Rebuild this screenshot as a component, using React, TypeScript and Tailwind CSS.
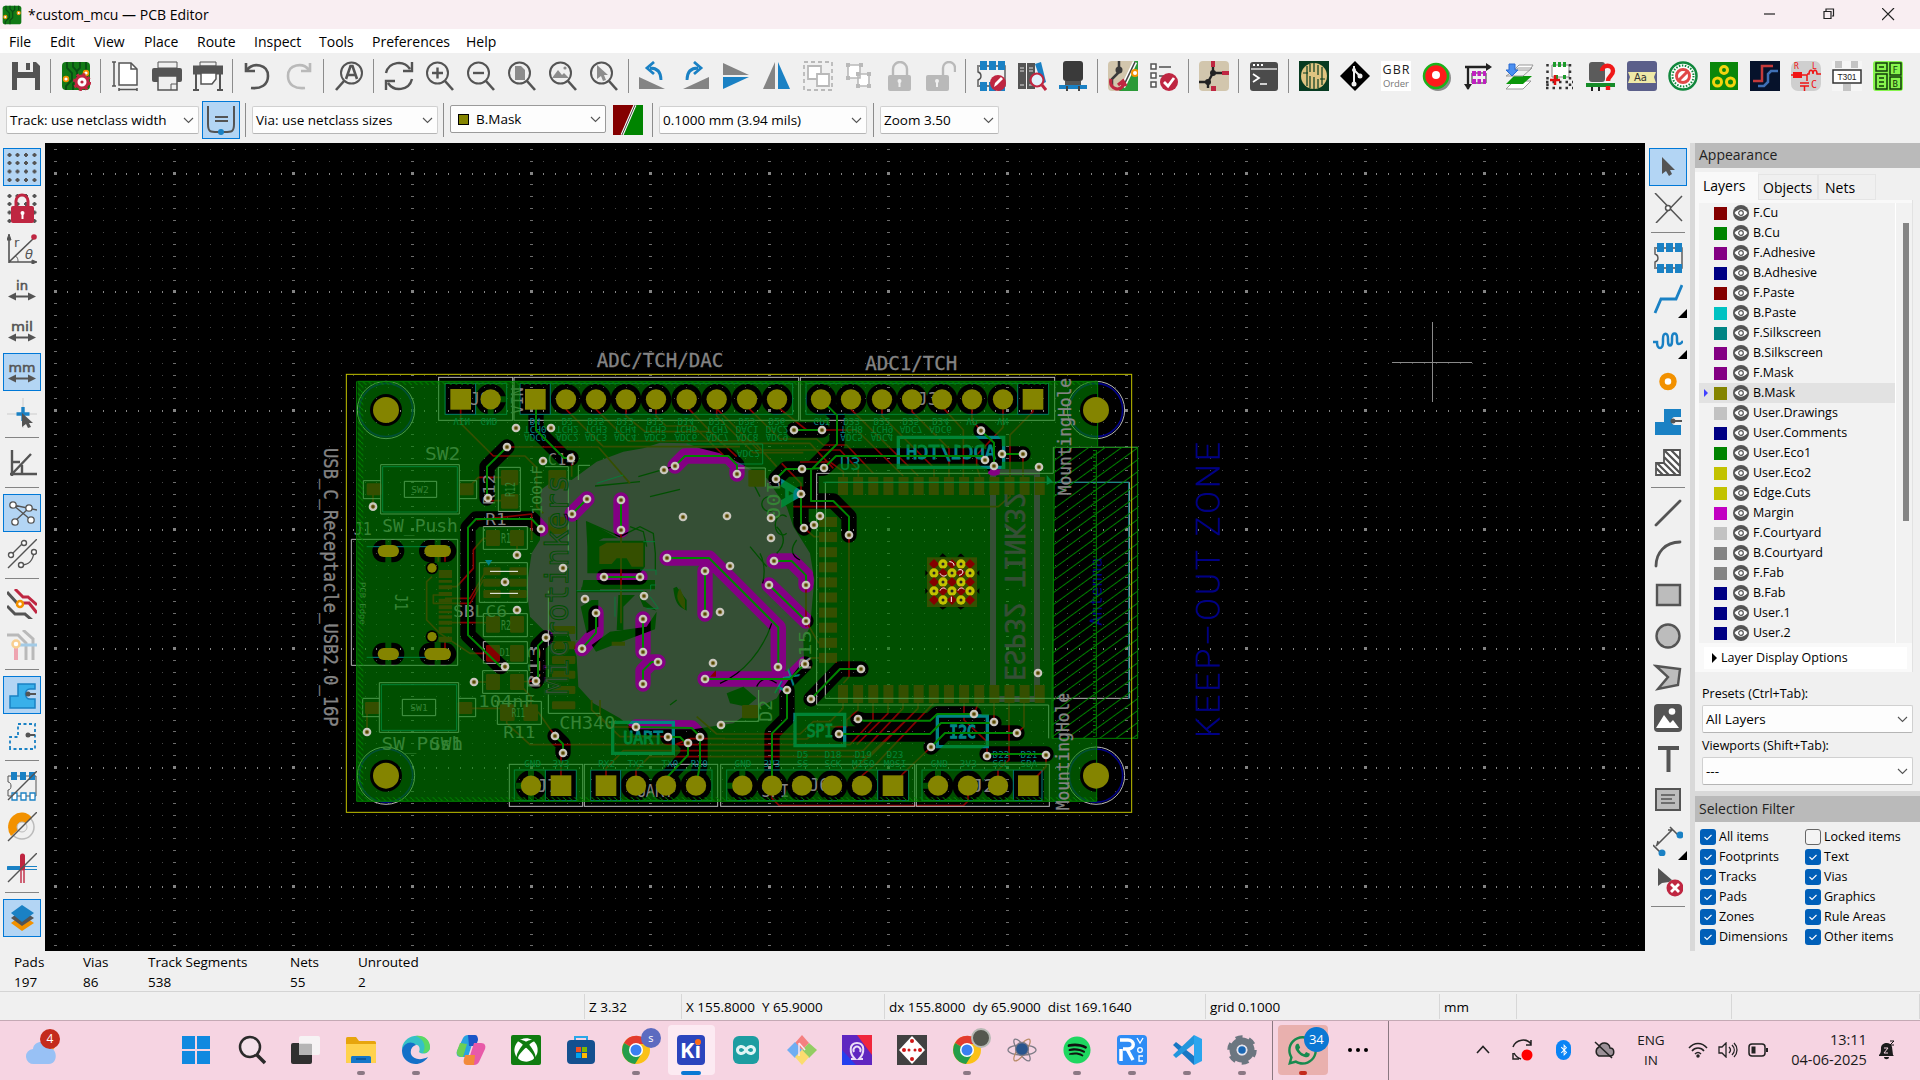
import React from "react";
import { FaSpotify, FaXbox, FaWhatsapp, FaBluetoothB, FaInfinity } from "react-icons/fa";

type Kids = { children?: React.ReactNode };
const D = "#545454";
const B = "#1a81c4";
const R = "#bf2641";
const O = "#f29100";
const G = "#b9b9b9";

function Ico({ children, size = 30 }: Kids & { size?: number }) {
  return (
    <svg width={size} height={size} viewBox="0 0 30 30" fill="none" className="block shrink-0">
      {children}
    </svg>
  );
}

const lens = (
  <g stroke={D} strokeWidth="2">
    <circle cx="12.5" cy="12" r="10.5" />
    <path d="M20 20 28 29" strokeWidth="2.6" />
  </g>
);
const board = (
  <g>
    <rect x="1" y="1" width="28" height="28" rx="4" fill="#127a16" />
    <path d="M6 1v6l5 5v7l-6 6v4M12 1v5l4 4v9l-4 4v6M19 1v6l-4 4M25 1v8" stroke="#0a4d14" strokeWidth="1.8" />
    <circle cx="5" cy="18" r="2.4" fill="#fff" stroke={O} strokeWidth="1.6" />
    <circle cx="25" cy="12" r="2.4" fill="#fff" stroke={O} strokeWidth="1.6" />
  </g>
);
const lock = (open: boolean) => (
  <g>
    <path d={open ? "M17 14V7a6 6 0 0 1 12 0v4" : "M8 14V8a7 7 0 0 1 14 0v6"} stroke={G} strokeWidth="2.4" />
    <rect x={open ? 0 : 3} y="14" width="23" height="16" rx="2" fill={G} />
    <circle cx={open ? 11 : 14.5} cy="20" r="2" fill="#f0f0f0" />
    <path d={open ? "M11 20v6" : "M14.5 20v6"} stroke="#f0f0f0" strokeWidth="2" />
  </g>
);
const footprint = (
  <g>
    <path d="M3 5h26v20H3M2 4v7c4 1 4 7 0 8v7" stroke={D} strokeWidth="1.4" />
    {[4, 13, 22].map((x) => (
      <path key={x} d={`M${x} 0h7v9h-7zM${x} 21h7v9h-7z`} fill={B} />
    ))}
  </g>
);

const topBar: (React.ReactNode | null)[] = [
  <g><path d="M1 1h24l4 4v24H1z" fill={D} /><path d="M7 1h15v10H7zM6 17h18v12H6z" fill="#efefef" /><path d="M15 2h4v7h-4z" fill={D} /></g>,
  null,
  <g>{board}<circle cx="21" cy="21" r="6" fill="#fff" stroke={R} strokeWidth="3" /><circle cx="21" cy="21" r="8" stroke={R} strokeWidth="2.2" strokeDasharray="3 3.3" /><circle cx="21" cy="21" r="1.6" fill={R} /></g>,
  null,
  <g stroke={D} strokeWidth="1.5"><path d="M8 2h12l6 6v16H8z" fill="#fff" /><path d="M20 2v6h6M3 1v24M1 1h4M1 25h4M8 28.5h18M8 27v3M26 27v3" /></g>,
  <g><path d="M6 1h19v6H6z" fill="#efefef" stroke={D} /><rect x="0" y="7" width="30" height="14" rx="2" fill={D} /><path d="M6 15h19v14H6z" fill="#efefef" stroke={D} strokeWidth="1.5" /><path d="M19 29v-6h6" stroke={D} /></g>,
  <g stroke={D}><path d="M7 1h16v4H7z" fill="#efefef" /><path d="M0 5h30v8H0z" fill={D} /><path d="M3 13v16M27 13v16M0 29h6M24 29h6" strokeWidth="2" /><path d="M8 12h15v6l-4 5H8z" fill="#fff" strokeWidth="1.5" /></g>,
  null,
  <path d="M3 2v8h9M4 9C10 1 25 3 25 15c0 9-7 13-17 12" stroke={D} strokeWidth="2.6" />,
  <path d="M26 2v8h-9M25 9C19 1 4 3 4 15c0 9 7 13 17 12" stroke={G} strokeWidth="2.6" />,
  null,
  <g><circle cx="17.5" cy="12" r="10.5" stroke={D} strokeWidth="2" /><path d="M10 20 2 29" stroke={D} strokeWidth="2.6" /><path d="M12 18 16.5 5h2L23 18M14 14h7" stroke={D} strokeWidth="2.6" /></g>,
  null,
  <g stroke={D} strokeWidth="2.4"><path d="M2 12C5 0 20-1 26 8M28 1v9h-9M28 18C25 30 10 31 4 22M2 29v-9h9" /></g>,
  <g>{lens}<path d="M7 12h11M12.500 6.500v11" stroke={D} strokeWidth="2.4" /></g>,
  <g>{lens}<path d="M7 12h11" stroke={D} strokeWidth="2.4" /></g>,
  <g>{lens}<path d="M8 5h6l4 4v10H8z" fill="#8c8c8c" /></g>,
  <g>{lens}<path d="M4 17 10 9l4 5 2-2 5 5z" fill="#8c8c8c" /><circle cx="17" cy="7" r="1.600" fill="#8c8c8c" /></g>,
  <g>{lens}<path d="M8 4v14l4-3 2 5 3-1-2-5h4z" fill="#8c8c8c" /></g>,
  null,
  <g><path d="M0 16v12h26z" fill="#848484" /><path d="M22 19c0-8-4-12-11-12M15 1l-7 6 7 6" stroke={B} strokeWidth="2.800" /></g>,
  <g><path d="M29 16v12H3z" fill="#848484" /><path d="M7 19c0-8 4-12 11-12M14 1l7 6-7 6" stroke={B} strokeWidth="2.800" /></g>,
  <g><path d="M2 2v12h26z" fill="#848484" /><path d="M2 28V16h26z" fill={B} /></g>,
  <g><path d="M13 1v27H1z" fill="#848484" /><path d="M16 1v27h12z" fill={B} /></g>,
  <g stroke={G} strokeWidth="1.800"><path d="M1 1h28v28H1z" strokeDasharray="4 3" /><path d="M5 5h13v13H5z" fill="#fff" /><path d="M14 13h12v12H14z" fill="#fff" /></g>,
  <g stroke={G} strokeWidth="1.600"><path d="M4 4h12v13H4zM14 13h11v12H14z" fill="#fff" /><path d="M2 2h4v4H2zM15 2h4v4h-4zM2 15h4v4H2zM12 11h4v4h-4zM23 11h4v4h-4zM12 23h4v4h-4zM23 23h4v4h-4z" fill={G} stroke="none" /></g>,
  lock(false),
  lock(true),
  null,
  <g>{footprint}<circle cx="22" cy="22" r="8" fill={R} /><path d="M18 26l1-4 6-6 2 2-6 6z" fill="#fff" /></g>,
  <g><path d="M1 2h8v26H1zM10 2h8v26h-8z" fill={D} /><path d="M3 7h4M3 10h4M12 7h4M12 10h4M3 24h4M12 24h4" stroke="#ddd" /><path d="M18 3l6-2 5 20-4 2z" fill={B} /><circle cx="20" cy="19" r="6.500" fill="#e2f2fb" stroke={R} strokeWidth="2.200" /><path d="M25 24l4 5" stroke={R} strokeWidth="3" /></g>,
  <g><rect x="5" y="0" width="20" height="20" rx="3" fill="#3a3a3a" /><path d="M7 20h16v5H7z" fill="#555" /><path d="M1 24h28v4H1z" fill={B} /><path d="M9 25v5M21 25v5" stroke="#444" strokeWidth="2" /></g>,
  null,
  <g><rect width="30" height="30" rx="4" fill="#d2c6ad" /><path d="M26 0h4v30H11z" fill="#2c9a38" /><path d="M11 0v9M12 10l-8 8v6" stroke="#3a3a3a" strokeWidth="2.500" /><path d="M27 1 15 26" stroke="#fff" strokeWidth="4.500" /><path d="M27 1 15 26" stroke="#444" strokeWidth="1.600" /><circle cx="11" cy="9" r="3.500" fill="#3a3a3a" /><circle cx="27" cy="12" r="3" fill="#fff" stroke={O} strokeWidth="2" /><path d="M3 18c-3 12 13 13 12 4M10 24l5-4 3 5" stroke={R} strokeWidth="3.200" /></g>,
  <g><path d="M2 3h5v5H2zM2 12h5v5H2zM2 21h5v5H2z" stroke={D} strokeWidth="1.500" fill="#fff" /><path d="M10 6h12M10 15h6" stroke="#777" strokeWidth="2" /><circle cx="20" cy="21" r="9" fill={R} /><path d="M15 21l4 4 6-8" stroke="#fff" strokeWidth="2.800" /></g>,
  null,
  <g><rect width="30" height="30" rx="4" fill="#d2c6ad" /><path d="M14 3v9h10M14 12l-5 9v6M9 21H0" stroke="#222" strokeWidth="2.400" /><circle cx="14" cy="12" r="3" fill="#222" /><circle cx="9" cy="21" r="3" fill="#222" /><path d="M12 0h4v6h-4zM23 10h7v4h-7zM12 25h5v5h-5z" fill={R} /></g>,
  null,
  <g><rect x="1" y="1" width="28" height="29" rx="3" fill="#4b4b4b" /><path d="M2 8h26" stroke="#ddd" strokeWidth="1.500" /><path d="M4 4h2M8 4h2M12 4h2" stroke="#fff" strokeWidth="2" /><path d="M4 13l6 4-6 4M11 23h7" stroke="#fff" strokeWidth="1.700" /></g>,
  null,
  <g><path d="M0 0h30v30H0z" fill="#073b21" /><circle cx="15" cy="15" r="13" fill="#dfc481" /><path d="M8 5v20M11 3v8M11 15v12M15 2v9M15 16v12M19 4v10M19 18v9M23 6v18M4 12h5M21 18h5" stroke="#073b21" strokeWidth="1.200" /></g>,
  <g><path d="M15 0 30 15 15 30 0 15z" fill="#000" /><path d="M14 5v19M14 9l6 6" stroke="#efefef" strokeWidth="2" /><circle cx="14" cy="23" r="2.500" fill="#efefef" /><circle cx="20" cy="15" r="2.500" fill="#efefef" /><circle cx="14" cy="9" r="2" fill="#efefef" /></g>,
  <g><path d="M0 0h30v30H0z" fill="#fff" /><text x="1.500" y="13" fontSize="12.500" textLength="27" fill="#222" fontFamily="Open Sans, sans-serif">GBR</text><text x="2" y="26" fontSize="9.500" textLength="26" fill="#777" fontFamily="Open Sans, sans-serif">Order</text></g>,
  <g><circle cx="16" cy="17" r="13" fill="#8b8b8b" /><circle cx="14" cy="15" r="12" fill="#ff1a1a" stroke="#1bb21b" strokeWidth="2.500" /><circle cx="14" cy="14" r="4" fill="#fff" /></g>,
  <g><path d="M5 28V6h22M2 6h6" stroke="#222" strokeWidth="2.300" /><path d="M1 23h8l-4 6zM23 2l6 4-6 4z" fill="#222" /><path d="M9 12h14v10H9z" stroke="#333" /><path d="M9 10h4v5H9zM14.500 10h3.500v5h-3.500zM20 10h3v5h-3zM9 18h4v5H9zM14.500 18h3.500v5h-3.500zM20 18h3v5h-3z" fill="#c020c0" /></g>,
  <g stroke="#999"><path d="M2 28h17l8-8H10zM10 9h16l3-5H15z" fill="#fff" /><path d="M2 23h17l9-8H10z" fill="#0a970a" stroke="none" /><path d="M2 15h17l9-8H14z" /><path d="M5 3h6v6h3l-6 6-6-6h3z" fill="#4a8ff0" stroke="#2b6bd0" /></g>,
  <g><path d="M7 4h17v12H7z" fill="#fff" stroke="#888" /><path d="M8 1h3v5H8zM13 1h3v5h-3zM18 1h3v5h-3zM10 14h3v4h-3zM18 14h3v4h-3z" fill="#1c9c2c" /><path d="M2.500 3v26M1 27h27M1 21h27M25 3v25" stroke="#333" strokeWidth="2.500" strokeDasharray="2.500 4" /><path d="M10 14v10M5 19h10" stroke="#e01010" strokeWidth="2.500" /></g>,
  <g><rect x="3" y="1" width="16" height="20" rx="3" fill="#5b5b5b" /><path d="M0 22h29v4H0z" fill="#168b28" /><path d="M6 26v4M13 26v4" stroke="#222" strokeWidth="2" /><path d="M16 10c0-7 11-7 11 0 0 5-5 5-5 10M22 25v4" stroke="#f01818" strokeWidth="4.400" /></g>,
  <g><rect width="30" height="30" rx="3" fill="#5b5f8a" /><path d="M1 11h28l-2 5 2 6H1l2-6z" fill="#efe9a8" /><text x="7" y="20" fontSize="10" fill="#333" fontFamily="DejaVu Sans, sans-serif">Aa</text></g>,
  <g><circle cx="15" cy="15" r="13.500" stroke="#11883d" strokeWidth="2.500" fill="#fff" /><circle cx="15" cy="15" r="10.500" stroke="#11883d" strokeWidth="2" strokeDasharray="1.500 1.500" /><circle cx="15" cy="15" r="6.500" stroke="#e04848" strokeWidth="3" /><path d="M10.500 19.500l9-9" stroke="#e04848" strokeWidth="3" /></g>,
  <g><path d="M1 1h28v28H1z" fill="#0a870a" /><g stroke="#f2d40e" strokeWidth="3"><circle cx="15" cy="9" r="3.500" /><circle cx="8.500" cy="21" r="4" /><circle cx="21.500" cy="21" r="4" /></g></g>,
  <g><path d="M0 0h30v30H0z" fill="#06122b" /><path d="M3 20h9V5h11" stroke="#c53a3a" strokeWidth="2.500" /><path d="M8 25h6l4-4v-8l3-3h7" stroke="#3f6fb5" strokeWidth="2.500" /></g>,
  <g><rect width="30" height="30" rx="7" fill="#cfcfcf" /><g stroke="#f01414" strokeWidth="1.500"><path d="M0 14h16v6M9 22h9M9 25h9M13.500 25v5M16 13h2c0-5 4-5 4 0 0-5 4-5 4 0h4" /><path d="M2 11h9v6H2z" fill="#f01414" stroke="none" /></g><text x="3" y="8" fontSize="8" fill="#f01414" fontFamily="DejaVu Sans Mono, monospace">R</text><text x="21" y="8" fontSize="8" fill="#f01414" fontFamily="DejaVu Sans Mono, monospace">L</text><text x="20" y="27" fontSize="10" fill="#f01414" fontFamily="DejaVu Sans Mono, monospace">C</text></g>,
  <g><path d="M0 0h30v30H0z" fill="#f6f6f6" /><path d="M3 0h7v7H3zM19 0h7v7h-7zM11 23h8v7h-8z" fill="#c4c4c4" /><path d="M1 9h28v13H1z" fill="#fff" stroke="#333" strokeWidth="1.500" /><text x="5.500" y="19" fontSize="8.500" textLength="19" fill="#222" fontFamily="Liberation Sans, sans-serif">T301</text></g>,
  <g><rect width="30" height="30" rx="3" fill="#87f54d" /><path d="M3 2h11v8H3zM3 13h11v15H3zM17 2h11v12H17zM17 16h11v12H17zM6 6h5M6 17h5M6 21h5M6 25h5" stroke="#123a0a" strokeWidth="1.500" /><text x="19.500" y="12" fontSize="9" fill="#123a0a" fontFamily="DejaVu Sans Mono, monospace">F</text><text x="19.500" y="26" fontSize="9" fill="#123a0a" fontFamily="DejaVu Sans Mono, monospace">B</text></g>,
];

const dots = [2.5, 10.5, 19, 27.5].flatMap((x) => [3, 11, 19.5, 28].map((y) => `M${x - 2} ${y}h4M${x} ${y - 2}v4`)).join("");
const unit = (t: string, w: number) => (
  <g>
    <text x={15 - w / 2} y="15" fontSize="12.500" textLength={w} lengthAdjust="spacingAndGlyphs" fill={D} stroke={D} strokeWidth=".5" fontFamily="DejaVu Sans, sans-serif">{t}</text>
    <path d="M4 21.500h22" stroke={D} strokeWidth="2" />
    <path d="M9 17.500v8l-8-4zM21 17.500v8l8-4z" fill={D} />
  </g>
);
const slash = <path d="M1 29 30 0" stroke={D} strokeWidth="1.400" />;

type Tool = { i?: React.ReactNode; on?: boolean; sub?: boolean } | null;
const leftTools: Tool[] = [
  { on: true, i: <path d={dots} stroke={D} strokeWidth="2" /> },
  { i: <g><path d={dots} stroke={D} strokeWidth="2" /><path d="M9 14V8a6 6 0 0 1 12 0v6" stroke={R} strokeWidth="3" /><rect x="4" y="13" width="23" height="17" rx="2" fill={R} /><circle cx="15.500" cy="20" r="2" fill="#fff" /><path d="M15.500 20v6" stroke="#fff" strokeWidth="2" /></g> },
  { i: <g stroke={D}><path d="M2 29V3M2 28h27M2 28 27 4" strokeWidth="1.600" /><path d="M8 22c3 1 3 4 3 6" /><path d="M0 6 2 0l2 6zM25 26l5 2-5 2z" fill={D} /><circle cx="27" cy="3" r="2.800" fill={R} stroke="none" /><text x="7" y="13" fontSize="13" fill={D} stroke="none" fontFamily="DejaVu Sans, sans-serif">r</text><text x="18" y="25" fontSize="13" fontStyle="italic" fill={D} stroke="none" fontFamily="DejaVu Sans, sans-serif">θ</text></g> },
  { i: unit("in", 12) },
  { i: unit("mil", 22) },
  { on: true, i: unit("mm", 27) },
  { i: <g><path d="M16 0v30M0 16h30" stroke="#ccc" /><path d="M16 9v14M9.500 16h13" stroke={B} strokeWidth="3.400" /><path d="M15 15v14l4-3 2 4 3-1-2-4h4z" fill={D} /></g> },
  null,
  { i: <path d="M5 2v26M3 26h27M5 26 24 6M13 14h-7M15 17v9" stroke={D} strokeWidth="2.400" /> },
  null,
  { on: true, i: <g stroke={D} strokeWidth="1.300" fill="#fff"><path d="M6 7 24 22M8 23 22 10M6 7l24 5" /><circle cx="6" cy="7" r="3.200" /><circle cx="22" cy="10" r="3.200" /><circle cx="8" cy="24" r="3.200" /><circle cx="24" cy="22" r="3.200" /></g> },
  { i: <g stroke={D} strokeWidth="1.400">{slash}<path d="M5 15 16 4M14 26c9 0 12-5 13-13" /><g fill="#fff"><circle cx="4" cy="16" r="2.500" /><circle cx="17" cy="4" r="2.500" /><circle cx="14" cy="26" r="2.500" /><circle cx="27" cy="13" r="2.500" /></g></g> },
  null,
  { i: <g strokeWidth="3"><path d="M8 0l8 8h5l9 8M16 14h6l8 10" stroke={R} /><path d="M0 3l10 11M0 17l8 8h10l8 7" stroke={D} /><circle cx="13" cy="15" r="3" fill="#fff" stroke={O} strokeWidth="2.500" /></g> },
  { i: <g strokeWidth="3"><path d="M0 5h11l8 8v17M16 0l10 9v21" stroke={G} /><path d="M9 16v14" stroke="#eea4b0" strokeWidth="4" /><path d="M12 15h18" stroke="#a3cbe6" /><circle cx="9" cy="14" r="3.500" fill="#fff" stroke="#f9cf91" strokeWidth="2.500" /></g> },
  null,
  { on: true, i: <g><path d="M3 28V16h8V4h17v5h-5c-6 0-6 10 0 10h5v9z" fill="#39b0ea" stroke={B} strokeWidth="1.500" /><circle cx="21" cy="14" r="2.500" fill={D} /><path d="M21 14h8" stroke={D} strokeWidth="2" /></g> },
  { i: <g><path d="M3 28V16h8V3h17v25z" stroke={B} strokeWidth="1.800" strokeDasharray="3 2.500" /><circle cx="21" cy="14" r="2.500" fill={D} /><path d="M21 14h7" stroke={D} strokeWidth="2" /></g> },
  null,
  { i: <g><path d="M1 5h28v20H1V19c4 0 4-8 0-8z" stroke={D} /><path d="M4 1h6v8H4zM13 1h6v8h-6zM22 1h6v8h-6z" fill={B} /><path d="M5 22h5v7H5zM14 22h5v7h-5zM23 22h5v7h-5z" fill="#fff" stroke={B} strokeWidth="1.300" />{slash}</g> },
  { i: <g><circle cx="15" cy="15" r="12" stroke="#bbb" strokeWidth="1.500" /><path d="M4 24A12 13 0 1 1 25 6z" fill={O} /><circle cx="15" cy="15" r="5" fill="#eee" stroke="#bbb" />{slash}</g> },
  { i: <g><path d="M1 15h15" stroke={B} strokeWidth="4" strokeLinecap="round" /><path d="M16 13.500h14M16 16.500h14" stroke={B} strokeWidth="1.200" /><path d="M15.500 3v12" stroke={R} strokeWidth="5" strokeLinecap="round" /><path d="M14 16v14M17 16v14" stroke={R} strokeWidth="1.400" />{slash}</g> },
  null,
  { on: true, i: <g><path d="M4 20l11 8 12-8-12-8z" fill={O} /><path d="M4 15l11 8 12-8-12-8z" fill={D} /><path d="M4 10l11-8 12 8-12 9z" fill={B} /></g> },
];

const rightTools: Tool[] = [
  { on: true, i: <path d="M9 5v17l4-3 3 5 3-2-2-4h5z" fill={D} /> },
  { i: <g stroke={D} strokeWidth="1.500"><path d="M2 0 29 28M29 3 3 30" /><circle cx="15" cy="15" r="2.500" fill="#fff" /></g> },
  null,
  { i: footprint },
  { sub: true, i: <path d="M2 29 8 15h15L29 1" stroke={B} strokeWidth="2.800" /> },
  { sub: true, i: <path d="M0 15h4c0 8 6 8 6 0v-3c0-7 5-7 5 0v2c0 6 4 6 4 0v-3c0-6 5-6 5 0v3c0 4 3 4 6 0" transform="translate(0 2)" stroke={B} strokeWidth="2.500" /> },
  { i: <circle cx="15" cy="15.500" r="6" fill="#fff" stroke={O} strokeWidth="5.500" /> },
  { i: <g><path d="M2 28V15h9V2h17v8h-6c-5 0-5 8 0 8h6v10z" fill={B} /><path d="M20 14h9" stroke={D} strokeWidth="2" /><circle cx="20" cy="14" r="2.500" fill={D} /></g> },
  { i: <g stroke={D} strokeWidth="1.800"><path d="M3 27V15h8V2h16v25z" fill="#fff" /><path d="M3 20l7 7M4 15l12 12M11 15l12 12M11 9l16 16M12 3l15 15M18 2l9 9" strokeWidth="2.300" /></g> },
  null,
  { i: <path d="M3 27 27 3" stroke={D} strokeWidth="2.800" strokeLinecap="round" /> },
  { i: <path d="M3 27C3 14 12 3 27 3" stroke={D} strokeWidth="2.800" strokeLinecap="round" /> },
  { i: <path d="M4 5h23v20H4z" fill="#bcbcbc" stroke={D} strokeWidth="2.400" /> },
  { i: <circle cx="15" cy="15" r="11.500" fill="#bcbcbc" stroke={D} strokeWidth="2.400" /> },
  { i: <path d="M3 4l24 3-2 16-20 4 10-12z" fill="#bcbcbc" stroke={D} strokeWidth="2.400" /> },
  { i: <g><rect x="1" y="1" width="28" height="28" rx="4" fill={D} /><circle cx="19" cy="8.500" r="3.300" fill="#fff" /><path d="M3 25 11 12l6 8 3-3 6 8z" fill="#fff" /></g> },
  { i: <path d="M5 4h21M15.500 4v24" stroke={D} strokeWidth="4" /> },
  { i: <g><path d="M3 4h24v21H3z" fill="#bcbcbc" stroke={D} strokeWidth="2" /><path d="M8 10h14M8 14h11M8 18h14" stroke={D} strokeWidth="1.500" /></g> },
  { sub: true, i: <g><path d="M3 20 20 3M17 1l8 8M0 19l9 9M5 15l-1 4M15 4l4 0" stroke={D} strokeWidth="1.600" /><circle cx="27" cy="9" r="3.500" fill={B} /><circle cx="9" cy="27" r="3.500" fill={B} /></g> },
  { i: <g><path d="M5 1v18l4-3 7-1 3-2z" fill={D} /><circle cx="22" cy="21" r="8.500" fill={R} /><path d="M18 17l8 8M26 17l-8 8" stroke="#fff" strokeWidth="2.800" /></g> },
  null,
];

function ToolColumn({ tools, left }: { tools: Tool[]; left?: boolean }) {
  return (
    <div className={"flex w-[45px] shrink-0 flex-col items-center bg-[#f0f0f0] pt-[3px] " + (left ? "pr-[2px]" : "")}>
      {tools.map((t, i) =>
        t === null ? (
          <div key={i} className="flex h-[9px] w-[34px] shrink-0 items-center"><div className="h-px w-full bg-[#848484]" /></div>
        ) : (
          <div key={i} className="flex h-[41px] w-[43px] shrink-0 items-center justify-center">
            <div className={"relative flex size-[38px] items-center justify-center " + (t.on ? "border border-[#0078d7] bg-[#b3d5f4]" : "")}>
              <Ico>{t.i}</Ico>
              {t.sub && <svg className="absolute bottom-0 right-0" width="9" height="9"><path d="M9 0v9H0z" /></svg>}
            </div>
          </div>
        ),
      )}
    </div>
  );
}

/* ---------- board view ---------- */
const tracks = [
  "M591 321 531 380V474", "M693 567 665 537H498L474 563V885L572 980", "M678 200V270L762 354H783", "M831 477 786 522",
  "M933 480V570", "M882 711H990", "M858 819V878L816 926", "M999 837V936", "M1044 966H1025L999 992V1032",
  "M708 893 684 917V1010L678 1023", "M1071 654H1197L1405 862V980", "M1185 693V822", "M1185 1017H1440L1485 972",
  "M1095 378 1125 348H1255L1281 375V402", "M1392 663H1445L1488 706V735", "M1377 735 1488 843", "M1452 270H1536",
  "M1533 178 1581 226V312L1503 390V483H1570L1617 530V585", "M1398 417 1428 387H1476L1542 384L1578 348H2016L2025 360",
  "M2076 342H2139", "M2013 272 2052 308V378", "M1473 462V550L1482 564", "M1653 987H1590L1503 1077",
  "M1431 1050V1135L1386 1180V1337", "M1644 1137 1660 1142H1860L1882 1122H1992", "M1587 1182H1860L1893 1149H2052",
  "M1863 1221 1905 1179H2121", "M2031 1242H2208", "M735 1188 759 1212V1239", "M978 1161 1145 1164 1170 1190V1275L1158 1337",
  "M1074 1191H1110L1134 1215V1245L1068 1315",
].join("");
const vias = "618,264 723,264 591,321 783,354 699,363 534,474 189,500 693,567 621,645 759,684 585,726 621,810 825,777 1002,768 1119,531 1251,528 1062,390 1095,378 831,477 786,522 933,480 933,570 882,711 990,711 858,819 816,926 999,837 999,936 1044,966 999,1032 708,893 678,1023 585,980 492,1026 171,1176 735,1188 759,1239 978,1161 1074,1191 1134,1209 1170,1191 1209,969 1230,816 1260,678 1233,1155 1071,654 1185,693 1185,822 1185,1017 1452,270 1536,270 1476,387 1542,384 1398,417 1281,402 1473,462 1530,528 1512,555 1482,564 1383,534 1383,594 1392,663 1488,735 1377,735 1488,843 1617,585 1485,972 1404,981 1431,1050 1503,1077 1653,987 1644,1137 1587,1182 1992,1122 2052,1146 2121,1179 1863,1221 2031,1248 2208,1245 2184,999 2187,381 2139,342 2076,342 2025,360 2052,378 2013,272"
  .split(" ").map((p) => p.split(",").map(Number));
const rounds = [
  ...[542, 768, 858, 948, 1038, 1130, 1220, 1311, 1401, 1533, 1623, 1716, 1806, 1896, 1986, 2079].map((x) => [x, 178]),
  ...[663, 978, 1068, 1158, 1297, 1386, 1476, 1566, 1656, 1884, 1974, 2064].map((x) => [x, 1337]),
];
const squares = [[452, 178], [676, 178], [2169, 178], [753, 1337], [888, 1337], [1749, 1337], [2155, 1337]];
const holes = [[228, 210], [228, 1307], [2358, 210], [2358, 1307]];
const usbPads = [[235, 633, 32], [383, 633, 40], [235, 942, 32], [383, 942, 40]];
const frames = [[386, 112, 222, 129], [612, 112, 854, 129], [1471, 112, 763, 129], [598, 1273, 220, 126], [823, 1273, 400, 126], [1232, 1273, 582, 126], [1819, 1273, 399, 126]];
const inner = [[405, 130, 185, 93], [630, 130, 818, 93], [1488, 130, 728, 93], [613, 1290, 186, 92], [842, 1290, 364, 92], [1250, 1290, 546, 92], [1836, 1290, 360, 92]];
const reds = [
  "M452 208V250L550 348H645L680 383V500L700 520", "M591 321H865L960 430", "M768 208 880 320H1290", "M858 208 955 303H1330L1400 380",
  "M948 208V228L1005 275H1200L1280 350", "M1038 208V228L1068 258H1150L1240 345", "M1130 200 1235 310H1500L1570 385", "M1220 208V228L1330 338H1480",
  "M1311 200 1410 297H1520L1540 315H1610L1690 400", "M1401 200 1490 270H1640L1780 408", "M1222 208 1345 330H1590L1645 390V410",
  "M1623 208 1825 408", "M1716 208V228L1872 384V410", "M1806 208V215L1917 326V410", "M1896 200 1960 270V410", "M1986 208V240L2013 272", "M2079 208V262L2000 345V380L2010 410",
  "M2169 208V215L2100 285V470L2065 500H1450", "M2139 342V410M1470 366H1560L1600 395V410", "M1617 585V1010L1600 1030",
  "M1473 462V430L1415 370M1482 564 1512 590H1530M1488 843 1525 908H1530M1485 972 1500 954H1530", "M1488 735V860",
  "M1599 1090V1105L1560 1145H1510L1470 1182H1220L1160 1130", "M1644 1090V1110L1610 1140V1160H1540L1490 1197H1240", "M1689 1090V1140L1620 1214H1235",
  "M1734 1090V1120L1640 1214", "M1779 1090V1105L1660 1232H1220M1824 1090V1105L1680 1250H1180", "M1870 1090 1700 1270 1656 1307M1800 1130 1630 1290",
  "M1962 1090V1140L2031 1205V1248M2005 1090 1992 1122M2052 1090V1146M2097 1090V1260L2064 1290V1320M2142 1090V1160L2121 1179",
  "M1863 1221 1780 1300 1749 1337M2208 1245V1280L2155 1337M1386 1337V1375L1408 1397H1960L1974 1383V1337",
  "M753 1337V1240M888 1337V1285L940 1232H1240M978 1337V1290L1018 1250H1250M1245 1214H660L590 1150V1120M1245 1196H1140L1100 1212",
  "M845 1080V1110L930 1190H1074M870 1080V1130L900 1161H978", "M600 412H505L470 448M189 500V448M600 482H545L534 474M500 540 665 522V600",
  "M405 740H440L490 685V630L520 595H550M405 765H370V790H480L520 720H560M405 775H480L530 690M405 848H540M366 710 350 725V840L390 880 480 940H550M385 665V640M405 665V640M405 905V930",
  "M621 595V645M492 1026H550M621 1026 678 1023M640 1045 663 1070V1100M171 1176V1105M465 1105H590M785 370V410M933 570V850M684 1115 735 1188",
].join("");
const redPads = [
  [170, 430, 44, 36], [447, 430, 44, 36], [165, 1086, 46, 36], [443, 1086, 44, 36],
  [573, 390, 52, 46], [573, 462, 52, 44], [528, 570, 42, 48], [600, 570, 42, 48], [528, 828, 42, 50], [600, 828, 42, 50],
  [528, 915, 42, 50], [600, 915, 42, 50], [528, 1002, 42, 48], [600, 1002, 42, 48], [570, 1093, 44, 50], [640, 1093, 44, 50],
  [520, 682, 52, 24], [520, 716, 52, 24], [520, 750, 52, 24], [598, 682, 52, 24], [598, 716, 52, 24], [598, 750, 52, 24],
  [715, 390, 54, 56], [715, 530, 54, 52], [726, 858, 70, 24], [726, 904, 70, 24], [726, 948, 70, 24], [726, 992, 70, 24], [726, 1038, 70, 24], [726, 1084, 70, 24],
  [1315, 390, 50, 50], [1296, 1095, 48, 40],
];
const pinLabels: [number, string[]][] = [
  [455, ["VIN"]], [537, ["GND"]], [676, ["D4", "TCH0", "ADC0"]], [772, ["D2", "TCH2", "ADC2"]], [858, ["D15", "TCH3", "ADC3"]], [946, ["D13", "TCH4", "ADC4"]], [1036, ["D12", "TCH5", "ADC5"]],
  [1128, ["D14", "TCH6", "ADC6"]], [1222, ["D27", "TCH7", "ADC7"]], [1311, ["D25", "DAC1", "ADC8"]], [1401, ["D26", "DAC2", "ADC9"]], [1536, ["GPI"]], [1625, ["D33", "TCH8", "ADC5"]], [1716, ["D32", "TCH9", "ADC4"]],
  [1803, ["D35", "ADC7"]], [1892, ["D34", "ADC6"]], [1986, ["VP"]], [2078, ["VN"]],
];
const bottomLabels: [number, string, string?][] = [
  [668, "GND"], [753, "3V3"], [890, "RX2"], [978, "TX2"], [1080, "TX0"], [1168, "RX0"], [1299, "GND"], [1386, "3V3"], [1478, "SS", "D5"], [1569, "SCK", "D18"], [1660, "MISO", "D19"], [1755, "MOSI", "D23"],
  [1888, "GND"], [1975, "3V3"], [2073, "SCL", "D22"], [2157, "SDA", "D21"],
];

function T({ x, y, w, h, t, c = "#848484", r = 0, flip = "", wt = 0, fill = true }: { x: number; y: number; w: number; h: number; t: string; c?: string; r?: number; flip?: string; wt?: number; fill?: boolean }) {
  const s = flip === "h" ? "scale(-1 1)" : flip === "v" ? "scale(1 -1)" : "";
  return (
    <text transform={`translate(${x} ${y}) ${s} rotate(${r})`} x={-w / 2} y={h / 2} fontSize={h * 1.36} textLength={w} lengthAdjust="spacingAndGlyphs" fill={fill ? c : "none"} stroke={c} strokeWidth={wt} fontFamily="DejaVu Sans Mono, monospace">
      {t}
    </text>
  );
}

function gridPaths() {
  let minor = "", row = "", col = "", cross = "";
  for (let i = 0; i < 134; i++)
    for (let j = 0; j < 68; j++) {
      const x = Math.round(55 + i * 11.905), y = Math.floor(149.3 + j * 11.89);
      const mx = i % 10 === 0, my = j % 10 === 2;
      if (mx && my) cross += `M${x - 1} ${y + 0.5}h3`;
      else if (mx) col += `M${x - 1} ${y + 0.5}h3`;
      else if (my) row += `M${x} ${y + 0.5}h1`;
      else minor += `M${x} ${y + 0.5}h1`;
    }
  return { minor, row, col, cross };
}
const grid = gridPaths();

function Board() {
  const zone = "M142 124H2363V320H2232V1195H2360V1384H140Z";
  return (
    <svg width="1600" height="808" viewBox="45 143 1600 808" className="block shrink-0 bg-black">
      <defs>
        <mask id="zone" maskUnits="userSpaceOnUse" x="0" y="0" width="2700" height="1500">
          <path d={zone} fill="#fff" />
          <g fill="none" stroke="#000" strokeWidth="46" strokeLinecap="round" strokeLinejoin="round"><path d={tracks} /></g>
          <g fill="#000">
            {rounds.map(([x, y]) => <circle key={x + "-" + y} cx={x} cy={y} r="46" />)}
            {squares.map(([x, y]) => <rect key={x + "-" + y} x={x - 46} y={y - 46} width="92" height="92" />)}
            {holes.map(([x, y]) => <circle key={x + "-" + y} cx={x} cy={y} r="48" />)}
            {usbPads.map(([x, y, w]) => <rect key={x + "-" + y} x={x - w - 16} y={y - 34} width={w * 2 + 32} height="68" rx="34" />)}
            <circle cx="366" cy="684" r="19" /><circle cx="366" cy="890" r="19" />
            <path d="M540 920 600 985 560 985 520 940z" />
          </g>
          <g stroke="#fff" strokeWidth="18">
            {usbPads.map(([x, y]) => <path key={x + "-" + y} d={`M${x} ${y - 36}v72`} />)}
            <path d="M663 1290v94M618 1337h45M542 178h50M542 178v47M1297 1290v47M1250 1337h47M1884 1290v47M1838 1337h46" />
          </g>
        </mask>
        <pattern id="hatch" width="29" height="29" patternUnits="userSpaceOnUse" patternTransform="rotate(-36)">
          <path d="M0 10h29" stroke="#008400" strokeWidth="3" />
        </pattern>
        <pattern id="teeth" width="17" height="17" patternUnits="userSpaceOnUse">
          <path d="M0 0 17 17" stroke="#008400" strokeWidth="3" />
        </pattern>
      </defs>
      <g shapeRendering="crispEdges" fill="none">
        <path d={grid.minor} stroke="#484848" />
        <path d={grid.row} stroke="#848484" strokeWidth="2" />
        <path d={grid.col} stroke="#6c6c6c" />
        <path d={grid.cross} stroke="#848484" strokeWidth="3" />
      </g>
      <g transform="translate(310 340) scale(.333333)">
        {/* lower layers */}
        <path d="M650 740 665 640 690 600 692 450 740 415 785 420 860 365 940 335 1000 325 1050 308 1130 310 1170 325 1230 340 1290 370 1370 415 1400 460 1430 500 1450 560 1500 640 1513 720 1500 860 1480 900 1482 960 1420 1040 1400 1075 1330 1110 1270 1150 1150 1168H970L930 1135 850 1090 805 1040 800 950 775 880 700 870 660 830Z" fill="#840084" />
        {/* logo cut-outs */}
        <g fill="#000">
          <path d="M828 545 862 560 925 595H880L832 620ZM832 602H1005V680L990 700H832ZM820 720H1035V748H815ZM815 740 870 735V752H812ZM812 800 845 780H865V860L830 880ZM845 915 858 935 935 905 1035 868 1040 815 1010 860 900 875ZM925 765H975L940 800V870H920ZM985 765 1040 812 1000 800ZM1090 745C1095 790 1105 800 1130 812V780L1100 740ZM1250 1060 1300 1040 1340 1075 1310 1100 1260 1090Z" />
          <path d="M868 620 890 608H1000V680H965L950 655 920 655 905 672H868Z" fill="#840000" />
          <path d="M1110 745q-22 30 15 65v-30zM905 905h40v12h-40zM1200 1010h18v-20z" fill="#840000" />
        </g>
        <g fill="none" stroke="#000" strokeWidth="4">
          <path d="M828 545 930 590 990 560 1030 580 1036 640V690M960 560 1000 575 1010 620M855 438 990 425M1020 470 1110 448M985 410 1090 380M800 755H1010M800 540V900M1385 850C1360 930 1300 1000 1230 1030M1320 620 1370 680M1350 640q20 40 8 90M1080 1095 1100 1080M1380 470a22 22 0 1 0 10 40M1430 530a22 30 0 1 0 0 50M1400 560q40 40 0 80" />
          <path d="M1330 430 1350 470M1460 600q-30 40 10 60M1340 1040q20-40 60-10M1270 1080q30-40 60 0" />
        </g>
        <path d="M2049 397H2181V1077H2049Z" fill="none" stroke="#840084" strokeWidth="18" />
        <path d={reds} fill="none" stroke="#840000" strokeWidth="5" strokeLinejoin="round" />
        <g fill="#840000">
          {redPads.map(([x, y, w, h]) => <rect key={x + "-" + y} x={x} y={y} width={w} height={h} rx="4" />)}
          {Array.from({ length: 14 }, (_, i) => <path key={i} d={`M${1584 + i * 45.4} 411h30v54h-30zM${1584 + i * 45.4} 1035h30v54h-30z`} />)}
          {Array.from({ length: 10 }, (_, i) => <rect key={i} x="1527" y={531 + i * 45.3} width="54" height="30" />)}
          <path d="M386 690h40v24h-40zM386 720h40v8h-40zM386 736h40v12h-40zM386 756h40v12h-40zM386 776h40v12h-40zM386 796h40v12h-40zM386 812h40v8h-40zM386 826h40v10h-40zM386 842h40v12h-40zM386 860h40v20h-40zM386 890h40v16h-40z" />
          <rect x="1851" y="652" width="150" height="149" />
        </g>
        <g fill="none" stroke="#b8b8b8" strokeWidth="3">
          {frames.map(([x, y, w, h]) => <rect key={x} x={x} y={y} width={w} height={h} />)}
          <path d="M124 598H443V976H124ZM212 374H448V522H212ZM283 424H380V472H283ZM212 422H160V476H212M448 422H500V476H448M208 1028H446V1177H208ZM277 1078H377V1127H277ZM208 1075H158V1130H208M446 1075H497V1130H446" />
          <path d="M565 382H631V514H565ZM520 560H652V628H520ZM508 668H652V787H508ZM520 821H652V890H520ZM520 905H652V970H520ZM518 992H652V1060H518ZM562 1084H694V1153H562ZM705 380H775V640M715 752V1120H870M805 420V376H840" />
          <path d="M2230 400H1520V1095H2216V1195M2230 400V322H2483M1546 427H2458V1075H1546ZM1280 384H1366V440M1346 1050V1144H1240" />
        </g>
        <g fill="none" stroke="#008484" strokeWidth="3">
          {inner.map(([x, y, w, h]) => <rect key={x} x={x} y={y} width={w} height={h} />)}
          <path d="M497 130V223M721 130V223M2123 130V223M706 1290V1382M932 1290V1382M1703 1290V1382M2110 1290V1382M170 620H420M170 952H420M218 380H442V516H218ZM214 1034H440V1171H214ZM1540 427H2456V1077M1130 312H1358V372H1280" />
          <g strokeWidth="10"><path d="M1765 292H2081V382H1765ZM908 1147H1090V1240H908ZM1455 1123H1604V1217H1455ZM1882 1128H2032V1220H1882Z" /></g>
        </g>
        <g fill="none" stroke="#b8b8b8" strokeWidth="3">{holes.map(([x, y]) => <circle key={x + "-" + y} cx={x} cy={y} r="86" />)}</g>
        <g fill="none" stroke="#000084" strokeWidth="5">{holes.map(([x, y]) => <circle key={x + "-" + y} cx={x} cy={y} r="80" />)}</g>
        <T x={398} y={340} w={106} h={38} t="SW2" /><T x={330} y={555} w={226} h={40} t="SW_Push" />
        <T x={337} y={1210} w={245} h={40} t="SW_Push" /><T x={408} y={1210} w={96} h={38} t="SW1" />
        <T x={330} y={449} w={52} h={20} t="SW2" /><T x={327} y={1103} w={52} h={20} t="SW1" />
        <T x={158} y={567} w={54} h={38} t="J1" /><T x={273} y={787} w={50} h={38} t="J1" r={90} />
        <T x={158} y={790} w={128} h={17} t="PCB Edge" r={90} />
        <T x={538} y={448} w={92} h={34} t="R12" r={-90} /><T x={558} y={536} w={64} h={36} t="R1" />
        <T x={510} y={812} w={162} h={36} t="SBLC6" /><T x={590} y={1083} w={170} h={36} t="104nF" /><T x={628} y={1176} w={96} h={36} t="R11" />
        <T x={588} y={594} w={30} h={30} t="R1" /><T x={588} y={855} w={30} h={30} t="R2" /><T x={584} y={936} w={30} h={24} t="D1" /><T x={625} y={1116} w={40} h={28} t="R11" /><T x={598} y={448} w={44} h={32} t="R12" r={-90} />
        <T x={832} y={1147} w={168} h={38} t="CH340" /><T x={755} y={358} w={84} h={36} t="C14" /><T x={680} y={450} w={150} h={32} t="100nF" r={-90} />
        <T x={672} y={980} w={130} h={36} t="R13" r={-90} />
        <T x={738} y={735} w={660} h={72} t="Microtinkers" r={-90} c="#840084" wt={4} />
        <T x={738} y={735} w={660} h={72} t="Microtinkers" r={-90} c="#000000" wt={3} fill={false} />
        <T x={510} y={177} w={60} h={38} t="J8" /><T x={622} y={182} w={80} h={36} t="VIN" r={-90} /><T x={712} y={1337} w={64} h={38} t="J7" /><T x={1035} y={1352} w={110} h={38} t="UART" />
        <T x={1853} y={177} w={64} h={38} t="J3" /><T x={1528} y={1335} w={64} h={38} t="J6" /><T x={1396} y={1352} w={84} h={38} t="SPI" /><T x={2020} y={1337} w={74} h={38} t="J2" />
        <T x={1621} y={370} w={64} h={40} t="U3" c="#008484" /><T x={1367} y={1112} w={66} h={40} t="D2" r={-90} />
        <T x={1392} y={480} w={120} h={40} t="100" r={90} /><T x={1484} y={930} w={120} h={36} t="R15" r={-90} /><T x={1440} y={460} w={80} h={50} t="A" r={90} c="#008484" wt={5} /><T x={1432} y={1030} w={90} h={40} t="TX" r={-60} c="#008484" />
        <T x={1923} y={337} w={270} h={42} t="ADC1/TCH" c="#008484" flip="h" wt={3} /><T x={1000} y={1192} w={120} h={40} t="UART" c="#008484" wt={3} /><T x={1530} y={1170} w={80} h={40} t="SPI" c="#008484" wt={3} /><T x={1958} y={1173} w={80} h={40} t="I2C" c="#008484" wt={4} />
        <T x={1315} y={340} w={70} h={20} t="ADC2" c="#008484" flip="v" />
        <T x={2115} y={740} w={566} h={58} t="ESP32 TINK32" c="#840084" r={-90} flip="h" wt={2} />
        <T x={2357} y={755} w={204} h={36} t="Antenna" c="#000084" r={-90} />
        {pinLabels.map(([x, l]) => l.map((t, k) => <T key={x + t + k} x={x} y={242 + k * 25} w={t.length * 17} h={18} t={t} c="#008484" flip="v" />))}
        {bottomLabels.map(([x, t, u]) => <g key={x}><T x={x} y={1271} w={t.length * 17} h={18} t={t} c="#008484" />{u && <T x={x} y={1244} w={u.length * 17} h={18} t={u} c="#008484" />}</g>)}

        {/* copper zone */}
        <g mask="url(#zone)">
          <path d={zone} fill="#008400" fillOpacity=".6" />
        </g>
        <path d="M1000 605H1035M800 752H1000M990 690H1038V705M1022 752V735H1038M915 770V830M860 430 940 405M1020 770 1045 805H1010" fill="none" stroke="#00843b" strokeWidth="2.500" />
        <path d="M142 124H2363V320M2360 1195V1384H140V124" fill="none" stroke="#008400" strokeWidth="3" />
        <path d="M143 125h17v1258h-17zM144 125h2218v10h-2218zM144 1372h2218v11h-2218z" fill="url(#teeth)" />
        <path d="M2233 322H2483V1195H2226V1095L2230 735L2233 400Z" fill="url(#hatch)" stroke="#008400" strokeWidth="3" />
        <path d="M2359 330V1190" stroke="#008400" strokeWidth="3" />
        <path d="M2353 330V1190" stroke="#008400" strokeWidth="8" strokeDasharray="3 8" />
        <path d={tracks} fill="none" stroke="#008400" strokeWidth="6" strokeLinejoin="round" />
        <path d="M540 694H624M540 760H624" stroke="#fff" strokeWidth="3" />
        <path d="M525 660h22l-11 17z" fill="#008484" />
        <path d="M2210 405v30l18-10z" fill="#00843b" />

        {/* thermal pad */}
        {Array.from({ length: 25 }, (_, i) => {
          const cx = 1872 + (i % 5) * 27, cy = 672 + Math.floor(i / 5) * 27;
          return i % 2 ? (
            <g key={i}><circle cx={cx} cy={cy} r="14" fill="#c2c200" /><circle cx={cx} cy={cy} r="4.500" fill="#222" /></g>
          ) : (
            <path key={i} d={`M${cx} ${cy - 15}l15 15-15 15-15-15z`} fill="#840000" />
          );
        })}
        <path d="M1888 650l10-10 12 10zM1942 650l10-10 12 10zM1888 801l10 8 12-8zM1942 801l10 8 12-8zM1846 690v18l8-9zM1846 744v18l8-9zM2008 690v18l-8-9zM2008 744v18l-8-9z" fill="#000" />
        <g fill="none" stroke="#fff" strokeWidth="3"><path d="M1918 665c8 0 15 5 14 12M1890 700c5 10 14 10 20 5M1945 690c18-6 18 14 2 16M1890 752c4-10 14-10 18-4M1944 752c4-10 14-10 18-4M1924 770v16" /></g>

        {/* pads */}
        <g fill="#848400">
          {rounds.map(([x, y]) => <circle key={x + "-" + y} cx={x} cy={y} r="30.500" />)}
          {squares.map(([x, y]) => <rect key={x + "-" + y} x={x - 31} y={y - 31} width="62" height="62" />)}
          {holes.map(([x, y]) => <circle key={x + "-" + y} cx={x} cy={y} r="39" />)}
          {usbPads.map(([x, y, w]) => <rect key={x + "-" + y} x={x - w} y={y - 18} width={w * 2} height="36" rx="18" />)}
          <circle cx="366" cy="684" r="14" /><circle cx="366" cy="890" r="14" />
        </g>
        <ellipse cx="2052" cy="398" rx="18" ry="9" fill="#840084" />
        {vias.map(([x, y]) => (
          <g key={x + "-" + y}><circle cx={x} cy={y} r="13" fill="#cbc8c0" /><circle cx={x} cy={y} r="5.500" fill="#55460a" stroke="#8a7a30" strokeWidth="2" /></g>
        ))}

        {/* board edge and labels outside */}
        <rect x="109" y="103" width="2356" height="1314" fill="none" stroke="#c2c200" strokeWidth="3" />
        <T x={1050} y={61} w={380} h={41} t="ADC/TCH/DAC" wt={1} />
        <T x={1804} y={70} w={276} h={41} t="ADC1/TCH" wt={1} />
        <T x={62} y={742} w={836} h={41} t="USB_C_Receptacle_USB2.0_16P" r={90} wt={1} />
        <T x={2263} y={290} w={352} h={38} t="MountingHole" r={-90} wt={1} />
        <T x={2258} y={1235} w={352} h={38} t="MountingHole" r={-90} wt={1} />
      </g>
      <text transform="translate(1220 738) rotate(-90)" fontSize="34" textLength="296" lengthAdjust="spacing" fill="#000084" fontFamily="Roboto, sans-serif" fontWeight="300">KEEP–OUT ZONE</text>
      <path d="M1392 362.500h80M1432.500 322v80" stroke="#8a8a8a" />
    </svg>
  );
}

/* ---------- small widgets ---------- */
const Chevron = () => (
  <svg width="11" height="7" viewBox="0 0 11 7" fill="none" className="shrink-0"><path d="M1 1l4.500 4.500L10 1" stroke="#555" strokeWidth="1.100" /></svg>
);
function Combo({ className, children }: Kids & { className: string }) {
  return (
    <div className={"flex h-[28px] shrink-0 items-center justify-between rounded-[2px] border border-[#d0d0d0] border-b-[#b5b5b5] bg-[#fdfdfd] pl-[3px] pr-[4px] text-[13.500px] " + className}>
      <span className="flex items-center whitespace-pre">{children}</span>
      <Chevron />
    </div>
  );
}
const VSep = ({ className = "" }: { className?: string }) => <div className={"h-[34px] w-px shrink-0 bg-[#8c8c8c] " + className} />;

const layers: [string, string][] = [
  ["F.Cu", "#840000"], ["B.Cu", "#008400"], ["F.Adhesive", "#840084"], ["B.Adhesive", "#000084"], ["F.Paste", "#840000"], ["B.Paste", "#00c2c2"],
  ["F.Silkscreen", "#008484"], ["B.Silkscreen", "#840084"], ["F.Mask", "#840084"], ["B.Mask", "#848400"], ["User.Drawings", "#c2c2c2"], ["User.Comments", "#000084"],
  ["User.Eco1", "#008400"], ["User.Eco2", "#c2c200"], ["Edge.Cuts", "#c2c200"], ["Margin", "#c200c2"], ["F.Courtyard", "#c2c2c2"], ["B.Courtyard", "#848484"],
  ["F.Fab", "#848484"], ["B.Fab", "#000084"], ["User.1", "#000084"], ["User.2", "#000084"],
];
const filters = ["All items", "Locked items", "Footprints", "Text", "Tracks", "Vias", "Pads", "Graphics", "Zones", "Rule Areas", "Dimensions", "Other items"];

function SidePanel() {
  return (
    <div className="flex w-[230px] shrink-0 flex-col border-l-[5px] border-[#d9d9d9] bg-[#f0f0f0] text-[12.500px]">
      <div className="flex h-[25px] shrink-0 items-center bg-[#bababa] pb-[2px] pl-[4px] text-[14px] text-[#222]">Appearance</div>
      <div className="mt-[4px] flex h-[28px] shrink-0 items-end text-[14px]">
        <div className="flex h-[28px] w-[63px] items-center bg-[#f9f9f9] pl-[8px] pb-px">Layers</div>
        <div className="flex h-[26px] w-[60px] items-center border border-[#e5e5e5] pl-[4px]">Objects</div>
        <div className="flex h-[26px] w-[58px] items-center border border-[#e5e5e5] pl-[6px]">Nets</div>
      </div>
      <div className="mr-[7px] flex h-[472px] shrink-0 flex-col border-r border-[#e2e2e2] bg-[#f9f9f9] pl-[4px] pt-[3px]">
        <div className="flex h-[440px]">
          <div className="w-[197px] border-r border-white bg-[#f2f2f2]">
            {layers.map(([n, c]) => (
              <div key={n} className={"flex h-[20px] items-center " + (n === "B.Mask" ? "bg-[#e2e2e2]" : "")}>
                <span className="flex w-[15px] pl-[5px]">{n === "B.Mask" && <svg width="4" height="8"><path d="M0 0l4 4-4 4z" fill="#4040ff" /></svg>}</span>
                <span className="size-[13px]" style={{ backgroundColor: c }} />
                <svg className="ml-[6px]" width="16" height="16" viewBox="0 0 16 16" fill="none"><circle cx="8" cy="8" r="8" fill="#545454" /><path d="M1.500 8q6.500-7.500 13 0-6.500 7.500-13 0" fill="#fff" /><circle cx="8" cy="8" r="2.300" stroke="#545454" strokeWidth="1.200" /></svg>
                <span className="ml-[4px] pt-px">{n}</span>
              </div>
            ))}
          </div>
          <div className="flex-1 bg-[#f2f2f2] pl-[7px] pt-[20px]"><div className="h-[298px] w-[6px] bg-[#858585]" /></div>
        </div>
        <div className="ml-[5px] mr-[5px] mt-[4px] flex h-[22px] items-center bg-white pl-[8px] text-[12.500px]"><svg width="5" height="10"><path d="M0 0l5 5-5 5z" /></svg><span className="ml-[4px]">Layer Display Options</span></div>
      </div>
      <div className="mt-[13px] flex h-[19px] shrink-0 items-center pl-[7px]">Presets (Ctrl+Tab):</div>
      <Combo className="ml-[7px] mt-px w-[211px]">All Layers</Combo>
      <div className="mt-[4px] flex h-[19px] shrink-0 items-center pl-[7px]">Viewports (Shift+Tab):</div>
      <Combo className="ml-[7px] mt-px w-[211px]">---</Combo>
      <div className="mt-[6px] h-[5px] shrink-0 bg-[#d9d9d9]" />
      <div className="flex h-[26px] shrink-0 items-center bg-[#bababa] pb-[2px] pl-[4px] text-[14px] text-[#222]">Selection Filter</div>
      <div className="mt-[5px] grid grid-cols-[105px_1fr] pl-[5px]">
        {filters.map((f) => (
          <div key={f} className="flex h-[20px] items-center gap-[3px]">
            {f === "Locked items" ? (
              <span className="size-[16px] rounded-[3px] border border-[#666] bg-[#f4f4f4]" />
            ) : (
              <svg width="16" height="16" fill="none"><rect width="16" height="16" rx="3" fill="#005fb8" /><path d="M4.500 8l2.500 2.500L11.500 6" stroke="#fff" strokeWidth="1.100" /></svg>
            )}
            {f}
          </div>
        ))}
      </div>
    </div>
  );
}

const chrome = (
  <g><circle cx="15" cy="15" r="14" fill="#fbc116" /><path d="M15 15 3 8A14 14 0 0 1 28 9H15z" fill="#e33b2e" /><path d="M3 8A14 14 0 0 0 14 29l7-11-6-3z" fill="#249d4b" /><circle cx="15" cy="15" r="7" fill="#fff" /><circle cx="15" cy="15" r="5.500" fill="#3a7ff0" /></g>
);
type App = { i: React.ReactNode; dot?: boolean };
const apps: App[] = [
  { i: <path d="M1 1h13v13H1zM16 1h13v13H16zM1 16h13v13H1zM16 16h13v13H16z" fill="#1089e0" /> },
  { i: <g><circle cx="14" cy="12" r="10" stroke="#2a2a2a" strokeWidth="2.500" fill="#f3e1ea" /><path d="M21 20l8 8" stroke="#2a2a2a" strokeWidth="3.500" /></g> },
  { i: <g><rect x="0" y="8" width="21" height="21" rx="2" fill="#303030" /><rect x="8" y="1" width="21" height="19" rx="2" fill="#f6f6f6" fillOpacity=".9" /><path d="M8 9h13v11H8z" fill="#b5b5b5" /></g> },
  { dot: true, i: <g><path d="M0 4c0-2 1-2 3-2h7l3 4h15c2 0 2 1 2 3v17c0 2-1 2-2 2H2c-2 0-2-1-2-2z" fill="#e7a50d" /><path d="M0 9h30v17c0 2-1 2-2 2H2c-2 0-2-1-2-2z" fill="#ffd24d" /><path d="M5 28v-5c0-2 1-2 2-2h16c2 0 2 1 2 2v5z" fill="#1577c9" /><path d="M10 24h10" stroke="#0b4f91" strokeWidth="1.500" /></g> },
  { dot: true, i: <g><path d="M1 13C4-3 27-3 29 12c0 7-8 8-11 5 2-5-1-8-5-7-6 1-8 7-8 11z" fill="#35c1c7" /><path d="M1 15c2-7 9-10 14-5-4 1-6 5-5 9 2 5 9 7 17 3-5 8-15 9-21 4-4-3-5-7-5-11z" fill="#1470c8" /><path d="M15 1c8-1 14 4 14 11 0 4-3 6-7 6 4-8 0-14-7-17" fill="#5bd964" /></g> },
  { i: <g><path d="M7 3c1-2 3-3 5-3h7l-7 22H5c-4 0-5-3-4-6z" fill="#28a3e0" /><path d="M12 0h7c2 0 3 2 3 5l-2 6h-7z" fill="#1a55c8" /><path d="M23 27c-1 2-3 3-5 3h-7l7-22h7c4 0 5 3 4 6z" fill="#e85aa8" /><path d="M18 30h-7c-3 0-4-3-3-6l1-4h10z" fill="#f28a3a" /><path d="M1 16l3-8 7 1-4 13c-4 0-7-2-6-6z" fill="#6bcf55" /></g> },
  { i: <g><rect width="30" height="30" rx="2" fill="#107c10" /><FaXbox x="3" y="3" size={24} color="#fff" /></g> },
  { i: <g><path d="M9 6V2h12v4" stroke="#2aa7e8" strokeWidth="2" /><rect x="1" y="5" width="28" height="24" rx="4" fill="#14508f" /><path d="M10 12h5v5h-5z" fill="#f25022" /><path d="M16 12h5v5h-5z" fill="#7fba00" /><path d="M10 18h5v5h-5z" fill="#00a4ef" /><path d="M16 18h5v5h-5z" fill="#ffb900" /></g> },
  { dot: true, i: <g>{chrome}</g> },
  { i: <g><rect x="1" y="0" width="28" height="30" rx="4" fill="#2b45bd" /><text x="4" y="23" fontSize="22" fontWeight="700" textLength="21" lengthAdjust="spacingAndGlyphs" fill="#fff" fontFamily="Open Sans, sans-serif">Ki</text><circle cx="22" cy="7" r="3" fill="#ff6a13" /></g> },
  { i: <g><rect x="2" y="1" width="26" height="28" rx="6" fill="#1d9da1" /><FaInfinity x="5" y="5" size={20} color="#dff5f5" /></g> },
  { i: <g><path d="M15 0l7 8-7 7-7-7z" fill="#f58080" /><path d="M30 15l-8 8-7-8 7-7z" fill="#93cd63" /><path d="M0 15l8-8 7 8-7 8z" fill="#70aef2" /><path d="M15 30l-7-8 7-7 7 7z" fill="#fbdc6f" /><path d="M12 8l6 7M12 8v13" stroke="#fbe6ee" strokeWidth="1.500" /></g> },
  { i: <g><path d="M0 0h30v30H0z" fill="#5f26c0" /><path d="M15 0h15v20z" fill="#f0263c" /><path d="M0 15v15h14z" fill="#2540ee" /><path d="M9 24h4c-6-6-6-16 2-16s8 10 2 16h4M12 17a3.500 3.500 0 1 1 6 0" stroke="#eadcf6" strokeWidth="2" /></g> },
  { i: <g><path d="M0 0h30v30H0z" fill="#414141" /><path d="M15 1l13 14-13 14L2 15z" fill="#fff" /><g fill="#d01717"><circle cx="15" cy="6" r="2" /><circle cx="15" cy="24" r="2" /><circle cx="7" cy="15" r="2" /><circle cx="23" cy="15" r="2" /><circle cx="12" cy="15" r="1.500" /><circle cx="18" cy="15" r="1.500" /></g></g> },
  { dot: true, i: <g>{chrome}</g> },
  { i: <g stroke="#7d7b86" strokeWidth="1.300"><ellipse cx="15" cy="15" rx="14" ry="5" /><ellipse cx="15" cy="15" rx="13" ry="4" transform="rotate(55 15 15)" /><ellipse cx="15" cy="15" rx="13" ry="4" transform="rotate(125 15 15)" stroke="#b98d6a" /><circle cx="15" cy="14" r="6.500" fill="#29558d" /></g> },
  { dot: true, i: <g><circle cx="15" cy="15" r="11" fill="#111" /><FaSpotify x="1" y="1" size={28} color="#1ed760" /></g> },
  { dot: true, i: <g><rect width="30" height="30" rx="4" fill="#2e8cf5" /><path d="M3 5h8c7 0 7 9 0 9H6M4 14v12M10 14l6 11" stroke="#fff" strokeWidth="3.500" /><path d="M20 3l3 5 3-5M26 26h-4v-5h4" stroke="#fff" strokeWidth="1.300" /><circle cx="23" cy="15" r="2.300" stroke="#fff" strokeWidth="1.300" /></g> },
  { dot: true, i: <g><path d="M22 0v30L1 10l3-3 18 14z" fill="#1777c4" /><path d="M22 0v9L4 23l-3-3z" fill="#2196dd" /><path d="M22 0l8 4v22l-8 4z" fill="#2aa5ee" /></g> },
  { dot: true, i: <g><circle cx="15" cy="15" r="9" stroke="#6c7680" strokeWidth="7" /><circle cx="15" cy="15" r="13" stroke="#6c7680" strokeWidth="3.500" strokeDasharray="7 6.600" /><circle cx="15" cy="15" r="4.500" fill="#1b67b3" stroke="#dfe6ee" strokeWidth="1.500" /></g> },
];

function Taskbar() {
  return (
    <div className="flex h-[60px] shrink-0 items-stretch border-t border-[#c4a9b4] bg-[#f6d4e2]">
      <div className="flex w-[168px] items-center pl-[26px]">
        <div className="relative">
          <svg width="32" height="30" viewBox="0 0 32 30"><circle cx="22" cy="9" r="7" fill="#f29a2c" /><path d="M8 28a7.500 7.500 0 0 1-1-15C8 4 21 4 23 12c9 0 9 16 0 16z" fill="#98c1f5" /></svg>
          <span className="absolute -top-[7px] left-[14px] flex size-[20px] items-center justify-center rounded-full bg-[#c42b1c] text-[12px] text-white">4</span>
        </div>
      </div>
      {apps.map((a, i) => (
        <div key={i} className="flex w-[55.100px] shrink-0 flex-col items-center pt-[4px]">
          <div className={"relative flex h-[50px] w-[47px] items-center justify-center rounded-[4px] " + (i === 9 ? "bg-[#fceaf2]" : "")}>
            <Ico>{a.i}</Ico>
            {i === 8 && <span className="absolute right-[-1px] top-[3px] flex size-[20px] items-center justify-center rounded-full bg-[#5c6bc0] text-[11px] text-white">s</span>}
            {i === 14 && <span className="absolute right-[-1px] top-[3px] size-[20px] rounded-full border-2 border-[#b7b9b4] bg-[#55584f]" />}
            {(a.dot || i === 9) && <span className={"absolute bottom-0 h-[4px] rounded-full " + (i === 9 ? "w-[20px] bg-[#0a78d4]" : "w-[8px] bg-[#8b7884]")} />}
          </div>
        </div>
      ))}
      <div className="ml-[2px] flex w-[117px] shrink-0 border-x border-[#8a7780] pl-[5px] pt-[4px]">
        <div className="relative flex h-[50px] w-[50px] items-center justify-center rounded-[4px] bg-[#e9b0ae]">
          <FaWhatsapp size={33} color="#178a4e" />
          <span className="absolute -right-[1px] top-[2px] flex size-[25px] items-center justify-center rounded-full bg-[#0a78d4] text-[13px] text-white">34</span>
          <span className="absolute bottom-0 h-[4px] w-[8px] rounded-full bg-[#c42b1c]" />
        </div>
        <svg className="ml-[19px] mt-[22px]" width="22" height="6"><circle cx="3" cy="3" r="2" /><circle cx="11" cy="3" r="2" /><circle cx="19" cy="3" r="2" /></svg>
      </div>
      <div className="ml-[77px] flex items-center pb-[2px] text-[#1a1a1a]">
        <div className="flex w-[34px] justify-center"><svg width="14" height="9" fill="none"><path d="M1 8l6-6.500L13 8" stroke="#222" strokeWidth="1.600" /></svg></div>
        <div className="flex w-[46px] justify-center"><svg width="22" height="22" fill="none"><path d="M1 8c3-8 14-9 18-3M19 1v5h-5M1 14v6h6M2 14c2 4 4 5 7 6" stroke="#222" strokeWidth="1.500" /><circle cx="15" cy="16" r="5.500" fill="#f00" /></svg></div>
        <div className="flex w-[36px] justify-center"><span className="flex h-[20px] w-[15px] items-center justify-center rounded-full bg-[#0a84f5]"><FaBluetoothB size={12} color="#fff" /></span></div>
        <div className="flex w-[44px] justify-center"><svg width="22" height="18" fill="none"><path d="M6 15a5 5 0 0 1 0-9C8 0 16 1 17 7c5 0 5 8 0 8z" fill="#9b9097" stroke="#222" strokeWidth="1.500" /><path d="M2 1l17 16" stroke="#222" strokeWidth="1.500" /></svg></div>
        <div className="flex w-[50px] flex-col items-center text-[13.500px] leading-[20px]"><span>ENG</span><span>IN</span></div>
        <div className="ml-[12px] flex items-center gap-[10px]">
          <svg width="20" height="16" fill="none" stroke="#222" strokeWidth="1.500"><path d="M1 6c5-6 13-6 18 0M4 9c3-4 9-4 12 0M7 12c2-2 4-2 6 0" /><circle cx="10" cy="14" r="1" fill="#222" /></svg>
          <svg width="20" height="16" fill="none" stroke="#222" strokeWidth="1.300"><path d="M1 5h3l4-4v14l-4-4H1zM11 5c2 2 2 4 0 6M14 3c3 3 3 7 0 10M16 1c4 4 4 10 0 14" /></svg>
          <svg width="21" height="14" fill="none" stroke="#222" strokeWidth="1.500"><rect x="1" y="1" width="16" height="12" rx="3" /><path d="M19 5v4" strokeWidth="2" /><rect x="3.500" y="3.500" width="4" height="7" fill="#222" stroke="none" /></svg>
        </div>
        <div className="flex w-[98px] flex-col items-end text-[14.500px] leading-[20px]"><span>13:11</span><span>04-06-2025</span></div>
        <svg className="ml-[11px]" width="18" height="20"><path d="M1 15c2-2 2-4 2-7 0-6 10-7 11-1l1 8 1 1H1zM6 17h5c0 3-5 3-5 0z" fill="#1c1c1c" /><path d="M6 8h4l-4 5h4" stroke="#f6d4e2" fill="none" /><path d="M12 1h4l-4 4h4" stroke="#111" fill="none" /></svg>
      </div>
    </div>
  );
}

const stats: [string, string, string][] = [["Pads", "197", "w-[69px]"], ["Vias", "86", "w-[65px]"], ["Track Segments", "538", "w-[142px]"], ["Nets", "55", "w-[68px]"], ["Unrouted", "2", "w-[90px]"]];
const status: [string, string][] = [["", "w-[585px]"], ["Z 3.32", "w-[97px]"], ["X 155.8000  Y 65.9000", "w-[203px]"], ["dx 155.8000  dy 65.9000  dist 169.1640", "w-[321px]"], ["grid 0.1000", "w-[234px]"], ["mm", "w-[77px]"], ["", "w-[215px]"], ["", "w-[188px]"]];
const menus: [string, string][] = [["File", "w-[41px]"], ["Edit", "w-[44px]"], ["View", "w-[50px]"], ["Place", "w-[53px]"], ["Route", "w-[57px]"], ["Inspect", "w-[65px]"], ["Tools", "w-[53px]"], ["Preferences", "w-[94px]"], ["Help", "w-[50px]"]];

export default function App() {
  return (
    <div className="flex h-[1080px] w-[1920px] flex-col overflow-hidden bg-[#f0f0f0] font-['Open_Sans',sans-serif] text-black">
      <div className="flex h-[29px] shrink-0 items-center bg-[#f9eef2] pl-[2px]">
        <Ico size={20}>{board}</Ico>
        <span className="ml-[6px] text-[14px]">*custom_mcu — PCB Editor</span>
        <div className="ml-auto flex">
          {["M0 6h11", "M1 3.500h7v7H1zM3 3V1h7.500v7H9", "M0 0l12 12M12 0L0 12"].map((d) => (
            <div key={d} className="flex w-[59px] justify-center"><svg width="13" height="13" fill="none"><path d={d} stroke="#222" strokeWidth="1.200" /></svg></div>
          ))}
        </div>
        <div className="w-[2px]" />
      </div>
      <div className="flex h-[24px] shrink-0 items-center bg-white pl-[9px] text-[14px]">
        {menus.map(([m, w]) => <span key={m} className={w}>{m}</span>)}
      </div>
      <div className="flex h-[47px] shrink-0 items-center pb-px pl-[5px]">
        {topBar.map((t, i) =>
          t === null ? (
            <div key={i} className="flex w-[9px] shrink-0 justify-center"><VSep /></div>
          ) : (
            <div key={i} className="flex w-[41px] shrink-0 justify-center"><Ico>{t}</Ico></div>
          ),
        )}
      </div>
      <div className="flex h-[43px] shrink-0 items-center pb-[3px] pl-[6px]">
        <Combo className="w-[193px]">Track: use netclass width</Combo>
        <div className="ml-[3px] flex size-[38px] items-center justify-center border border-[#0078d7] bg-[#b3d5f4]">
          <Ico><path d="M2 1v18c0 9 3 8 13 8s13 1 13-8V1M9 12h13M9 16h13" stroke={D} strokeWidth="2" /><circle cx="15" cy="27" r="3" fill={B} /></Ico>
        </div>
        <VSep className="ml-[5px] mr-[6px]" />
        <Combo className="w-[186px]">Via: use netclass sizes</Combo>
        <VSep className="ml-[5px] mr-[6px]" />
        <Combo className="mb-[2px] w-[156px] !border-[#9a9a9a]"><span className="ml-[4px] mr-[7px] inline-block size-[11px] border border-black bg-[#848400]" />B.Mask</Combo>
        <svg width="30" height="30" className="ml-[7px]"><path d="M0 0h30v30H0z" fill="#008400" /><path d="M0 0h22L9 30H0z" fill="#840000" /><path d="M22 0 9 30" stroke="#fff" strokeWidth="3" /><path d="M22 0 9 30" stroke="#444" strokeWidth="1" /></svg>
        <VSep className="ml-[9px] mr-[6px]" />
        <Combo className="w-[208px]">0.1000 mm (3.94 mils)</Combo>
        <VSep className="ml-[6px] mr-[6px]" />
        <Combo className="w-[119px]">Zoom 3.50</Combo>
      </div>
      <div className="flex h-[808px] shrink-0">
        <ToolColumn tools={leftTools} left />
        <Board />
        <ToolColumn tools={rightTools} />
        <SidePanel />
      </div>
      <div className="flex h-[41px] shrink-0 border-b border-[#d4d4d4] pl-[14px] pt-px text-[13.500px] leading-[20px]">
        {stats.map(([a, b, w]) => <div key={a} className={"flex flex-col whitespace-nowrap " + w}><span>{a}</span><span>{b}</span></div>)}
      </div>
      <div className="flex h-[28px] shrink-0 items-center pt-px text-[13.500px]">
        {status.map(([t, w], i) => (
          <div key={i} className={"flex h-[25px] shrink-0 items-center whitespace-pre border-r border-[#d7d7d7] pl-[4px] pt-px " + w}>{t}</div>
        ))}
      </div>
      <Taskbar />
    </div>
  );
}
